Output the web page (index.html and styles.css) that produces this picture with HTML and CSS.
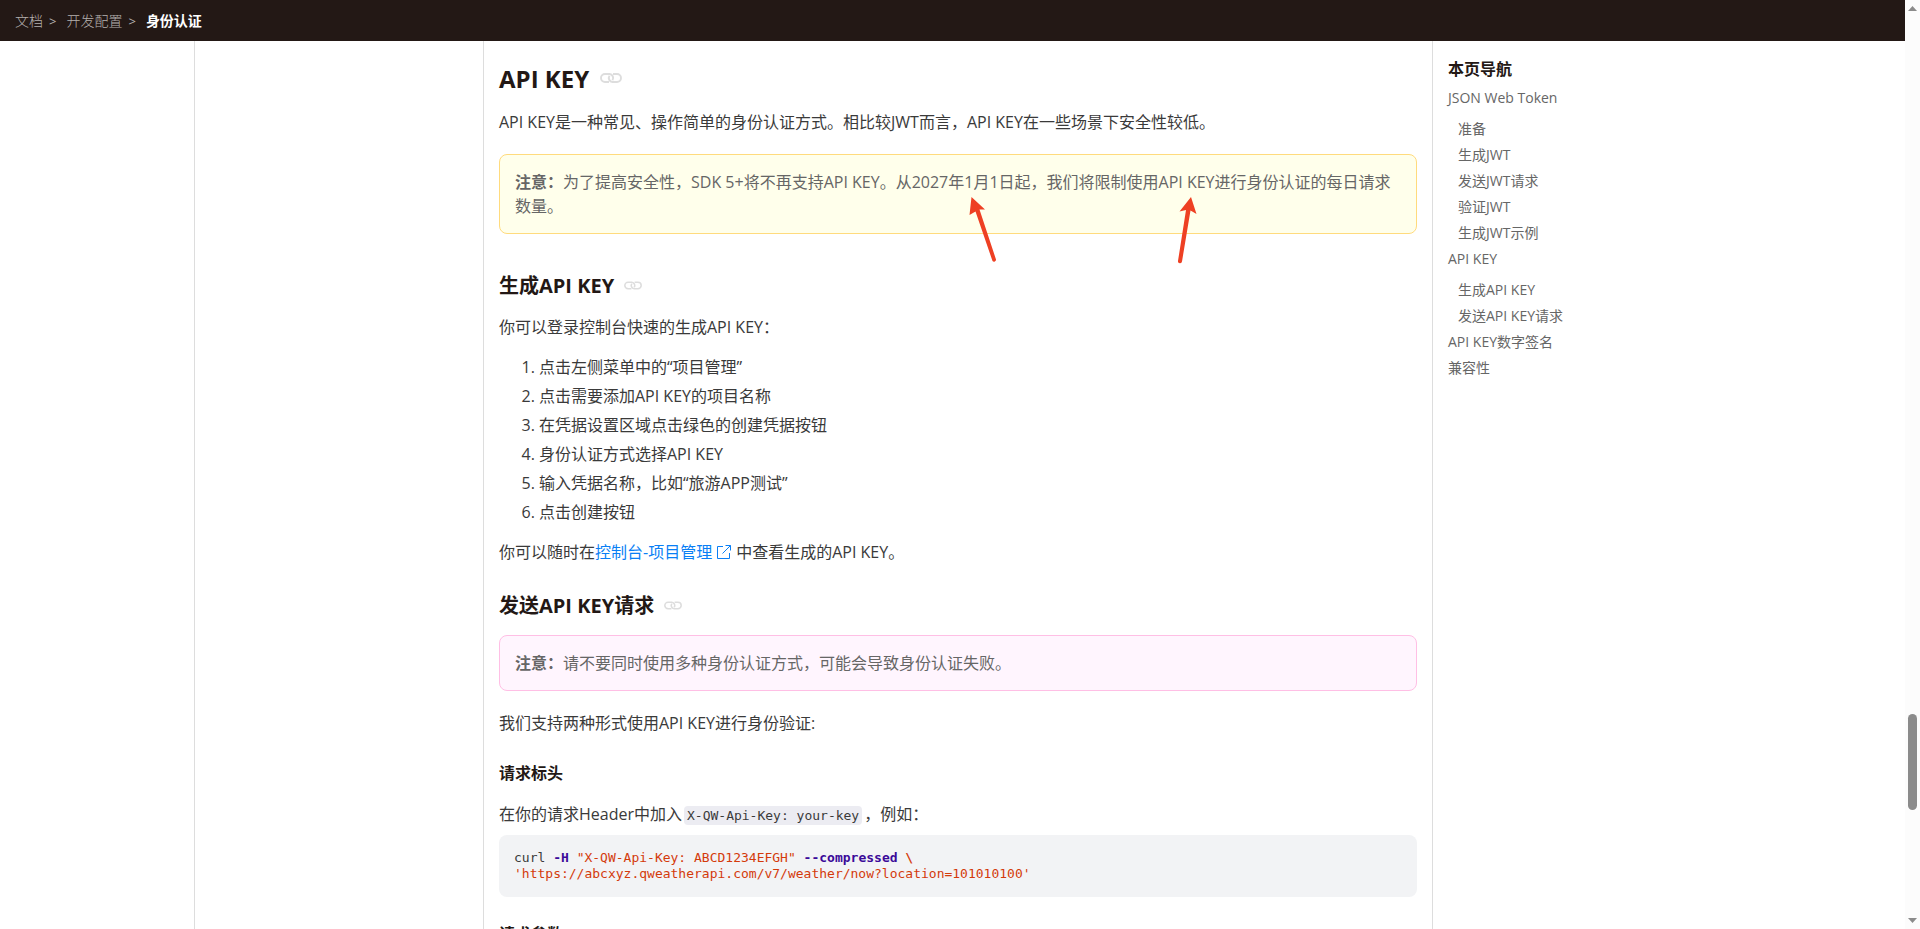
FILE: index.html
```html
<!DOCTYPE html>
<html lang="zh-CN">
<head>
<meta charset="utf-8">
<title>身份认证 - 开发配置</title>
<link rel="stylesheet" href="styles.css">
</head>
<body>
<svg class="sprite" aria-hidden="true">
  <symbol id="chain" viewBox="0 0 22 10">
    <path d="M9 9H5A4 4 0 0 1 5 1H9.500A4 4 0 0 1 12.500 7.200M13 1H17A4 4 0 0 1 17 9H12.500A4 4 0 0 1 9.500 2.800" fill="none" stroke="currentColor" stroke-width="1.900"/>
  </symbol>
</svg>
<div class="page">
  <header class="topbar">
    <nav class="crumbs" aria-label="面包屑">
      <a href="#">文档</a><span class="sep">&gt;</span><a href="#">开发配置</a><span class="sep">&gt;</span><strong>身份认证</strong>
    </nav>
  </header>
  <div class="columns">
    <div class="side"></div>
    <main class="article">
      <h2>API KEY <a href="#" class="anchor" aria-label="API KEY"><svg><use href="#chain"/></svg></a></h2>
      <p>API KEY是一种常见、操作简单的身份认证方式。相比较JWT而言，API KEY在一些场景下安全性较低。</p>
      <div class="note warning">
        <strong>注意：</strong>为了提高安全性，SDK 5+将不再支持API KEY。从2027年1月1日起，我们将限制使用API KEY进行身份认证的每日请求数量。
        <svg class="marks" viewBox="0 0 240 70" aria-hidden="true">
          <path d="M2.500 1L16 13.500L10.500 13.500L27 63.500A2 2 0 0 1 23.500 65L6.500 15.500L0.500 19Z"/>
          <path d="M222 1L227.500 18L221.500 14.500L213 65.500A2 2 0 0 1 209 65L217 14L210.500 15.500Z"/>
        </svg>
      </div>
      <h3>生成API KEY <a href="#" class="anchor" aria-label="生成API KEY"><svg><use href="#chain"/></svg></a></h3>
      <p>你可以登录控制台快速的生成API KEY：</p>
      <ol>
        <li>点击左侧菜单中的“项目管理”</li>
        <li>点击需要添加API KEY的项目名称</li>
        <li>在凭据设置区域点击绿色的创建凭据按钮</li>
        <li>身份认证方式选择API KEY</li>
        <li>输入凭据名称，比如“旅游APP测试”</li>
        <li>点击创建按钮</li>
      </ol>
      <p>你可以随时在<a href="#" class="external">控制台-项目管理<svg viewBox="0 0 16 16"><path d="M7 2.500H1.500V14.500H13.500V9M9.500 1.500H14.500V6.500M14.500 1.500L6.500 9.500" fill="none" stroke="currentColor"/></svg></a>中查看生成的API KEY。</p>
      <h3 class="send">发送API KEY请求 <a href="#" class="anchor" aria-label="发送API KEY请求"><svg><use href="#chain"/></svg></a></h3>
      <div class="note danger"><strong>注意：</strong>请不要同时使用多种身份认证方式，可能会导致身份认证失败。</div>
      <p>我们支持两种形式使用API KEY进行身份验证:</p>
      <h4>请求标头</h4>
      <p>在你的请求Header中加入<code>X-QW-Api-Key: your-key</code>，例如：</p>
      <pre>curl <b>-H</b> <span class="str">"X-QW-Api-Key: ABCD1234EFGH"</span> <b>--compressed</b> <span class="str esc">\</span>
<span class="str">'https://abcxyz.qweatherapi.com/v7/weather/now?location=101010100'</span></pre>
      <h4>请求参数</h4>
    </main>
    <nav class="toc" aria-label="本页导航">
      <h5>本页导航</h5>
      <ul>
        <li><a href="#">JSON Web Token</a>
          <ul>
            <li><a href="#">准备</a></li>
            <li><a href="#">生成JWT</a></li>
            <li><a href="#">发送JWT请求</a></li>
            <li><a href="#">验证JWT</a></li>
            <li><a href="#">生成JWT示例</a></li>
          </ul>
        </li>
        <li><a href="#">API KEY</a>
          <ul>
            <li><a href="#">生成API KEY</a></li>
            <li><a href="#">发送API KEY请求</a></li>
          </ul>
        </li>
        <li><a href="#">API KEY数字签名</a></li>
        <li><a href="#">兼容性</a></li>
      </ul>
    </nav>
  </div>
</div>
<div class="scrollbar" aria-hidden="true">
  <svg viewBox="0 0 9 5"><path d="M0 5L4.500 0L9 5Z"/></svg>
  <div class="track"><div class="thumb"></div></div>
  <svg viewBox="0 0 9 5"><path d="M0 0H9L4.500 5Z"/></svg>
</div>
</body>
</html>
```
FILE: styles.css
```css
* {
  box-sizing: border-box;
}

body {
  margin: 0;
  height: 100vh;
  display: flex;
  overflow: hidden;
  background: #fff;
  color: #3a3a3a;
  font-family: "Open Sans", "Noto Sans CJK SC", sans-serif;
  font-size: 16px;
  line-height: 24px;
}

h2, h3, h4, h5, p, ol, ul, pre {
  margin: 0;
  padding: 0;
}

a {
  color: inherit;
  text-decoration: none;
}

.sprite {
  display: none;
}

.page {
  flex: 1;
  min-width: 0;
  display: flex;
  flex-direction: column;
}

.topbar {
  flex: none;
  height: 41px;
  padding: 0 15px;
  display: flex;
  align-items: center;
  background: #231815;
  color: #b5b0af;
  font-size: 14px;
}

.crumbs {
  display: flex;
}

.crumbs a {
  font-weight: 300;
}

.sep {
  margin: 0 10px 0 6px;
  font-size: 13px;
}

.crumbs strong {
  color: #fff;
}

.columns {
  flex: 1;
  min-height: 0;
  width: 100%;
  max-width: 1517px;
  margin: 0 auto;
  display: grid;
  grid-template-columns: 289px minmax(0, 1fr) 278px;
}

.side {
  border-left: 1px solid #ddd;
}

.article {
  padding: 22px 15px 0;
  border-left: 1px solid #ddd;
  border-right: 1px solid #ddd;
}

h2, h3, h4, h5 {
  color: #231815;
  font-weight: 700;
}

h2 {
  font-size: 24px;
  line-height: 32px;
  margin-bottom: 15px;
}

h3 {
  font-size: 20px;
  line-height: 28px;
  margin: 38px 0 15px;
}

h3.send {
  margin: 28px 0 15px;
}

h4 {
  font-size: 16px;
  margin: 26px 0 17px;
}

.anchor {
  margin-left: 5px;
  color: #ddd;
}

.anchor svg {
  width: 18px;
  height: 9px;
  vertical-align: 3px;
}

h2 .anchor svg {
  width: 22px;
  height: 10px;
  vertical-align: 5px;
}

.note {
  position: relative;
  margin: 20px 0;
  padding: 15px;
  border: 1px solid;
  border-radius: 8px;
  color: #666;
}

.warning {
  border-color: #ffdb7d;
  background: #ffffeb;
}

.danger {
  margin-top: 0;
  border-color: #ffbfe5;
  background: #fff5fe;
}

.marks {
  position: absolute;
  left: 469px;
  top: 41px;
  width: 240px;
  height: 70px;
  fill: #ee4023;
}

ol {
  margin: 14px 0 13px;
  padding-left: 40px;
}

ol li {
  line-height: 29px;
}

.external {
  color: #0a7ff5;
}

.external svg {
  width: 16px;
  height: 16px;
  margin: 0 4px;
  vertical-align: -2px;
}

code, pre {
  font-family: "DejaVu Sans Mono", monospace;
  font-size: 13px;
}

code {
  margin: 0 2px;
  padding: 2px 3px;
  border-radius: 4px;
  background: #ececf2;
  line-height: 1;
}

pre {
  margin: 9px 0 25px;
  padding: 15px;
  border-radius: 8px;
  background: #f2f3f5;
  line-height: 16px;
}

pre + h4 {
  margin-top: 25px;
}

pre b {
  color: #3b0a99;
}

.str {
  color: #d43a0b;
}

.esc {
  font-weight: 700;
}

.toc {
  padding: 16px 15px;
  color: #666;
  font-size: 14px;
}

.toc h5 {
  margin-bottom: 4px;
  font-size: 16px;
}

.toc ul {
  list-style: none;
}

.toc li {
  line-height: 26px;
}

.toc ul ul {
  padding: 5px 0 0 10px;
}

.scrollbar {
  flex: none;
  width: 15px;
  padding: 6px 3px;
  display: flex;
  flex-direction: column;
  background: #fcfcfc;
}

.scrollbar svg {
  width: 9px;
  height: 5px;
  fill: #8b8b8b;
}

.track {
  flex: 1;
  display: flex;
  flex-direction: column;
}

.track::before {
  content: "";
  flex: 703;
}

.track::after {
  content: "";
  flex: 108;
}

.thumb {
  height: 96px;
  border-radius: 5px;
  background: #8b8b8b;
}
```
